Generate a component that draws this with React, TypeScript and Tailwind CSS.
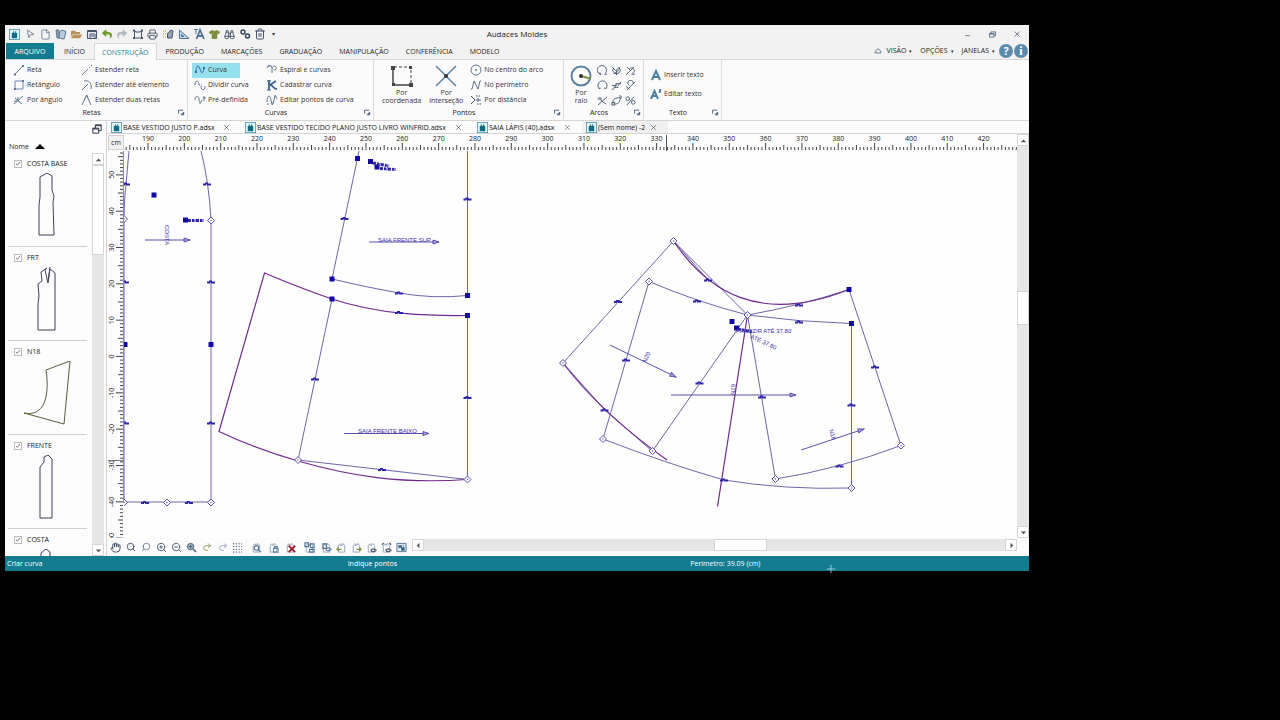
import React from "react";
import { Binoculars, File, Hand, MousePointer2, Printer, Redo2, Search, Trash2, Undo2, ZoomIn, ZoomOut } from "lucide-react";
import { FaFolderOpen, FaReply, FaShare, FaTshirt } from "react-icons/fa";

const PX_PER_CM = 3.633;

type Point = [number, number];

interface GlyphProps {
  d?: string;
  className?: string;
  children?: React.ReactNode;
}

/** Thin line icon on a 12x12 grid. */
function Glyph({ d, className = "size-3 text-slate-500", children }: GlyphProps) {
  return (
    <svg viewBox="0 0 12 12" className={`shrink-0 ${className}`} fill="none" stroke="currentColor" strokeWidth="1" aria-hidden="true">
      {d && <path d={d} />}
      {children}
    </svg>
  );
}

function AppLogo({ className = "size-[11px]" }: { className?: string }) {
  return (
    <svg viewBox="0 0 12 12" className={`shrink-0 ${className}`} aria-hidden="true">
      <rect x="0.5" y="0.5" width="11" height="11" fill="#e8f6fa" stroke="#5f9fb4" />
      <path d="M3 4.5 4.2 4V2.4h1V4h1.6V2.4h1V4l1.2.5V10H3z" fill="#0d6f86" />
    </svg>
  );
}

const QUICK_ACCESS: { label: string; icon: React.ReactNode }[] = [
  { label: "Audaces", icon: <AppLogo /> },
  { label: "Selecionar", icon: <MousePointer2 className="size-[10px] rotate-12 text-slate-500" strokeWidth={1.8} /> },
  { label: "Novo", icon: <File className="size-[11px] text-slate-500" strokeWidth={1.8} /> },
  {
    label: "Novo molde",
    icon: (
      <Glyph className="size-3 text-slate-500">
        <path d="M1 2h3v8H2z" fill="#8fa8bf" />
        <path d="M4.500 4 7 2l4 1.500-2 7.500-5-1z" fill="#b9cddc" />
      </Glyph>
    ),
  },
  { label: "Abrir", icon: <FaFolderOpen className="size-[11px] text-[#b9925a]" /> },
  {
    label: "Salvar",
    icon: (
      <Glyph className="size-3 text-slate-600">
        <path d="M1.500 2.500h9v8h-9z" fill="#e5e7eb" />
        <path d="M2 3.500h8M4 6h5v4.500H4zM5 8h3" />
      </Glyph>
    ),
  },
  { label: "Desfazer", icon: <FaReply className="size-[10px] text-[#6f9a2c]" /> },
  { label: "Refazer", icon: <FaShare className="size-[10px] text-[#b4bbc0]" /> },
  {
    label: "Encaixe",
    icon: (
      <Glyph className="size-3 text-slate-600">
        <path d="M2.500 3v7h7V3L8 4H4z" />
        <path d="M1 1.500h2v2H1zM9 1.500h2v2H9zM1 9h2v2H1zM9 9h2v2H9z" fill="currentColor" stroke="none" />
      </Glyph>
    ),
  },
  { label: "Imprimir", icon: <Printer className="size-[11px] text-slate-600" strokeWidth={2} /> },
  {
    label: "Graduar",
    icon: (
      <Glyph className="size-3 text-slate-600">
        <path d="M1 3h3M1 6h3M1 9h3" stroke="#b48a3c" strokeDasharray="1 1" />
        <path d="M5.500 10V6L9 2l2 1-1 7z" fill="#94a3b8" />
        <path d="M5 5h2" stroke="#6f9a2c" />
      </Glyph>
    ),
  },
  {
    label: "Medidas",
    icon: (
      <Glyph className="size-3 text-[#4f7396]">
        <path d="M1.500 2v8.500H11z" fill="#c5d9e8" />
        <path d="M3.500 6.500v2H6z" fill="#fff" />
      </Glyph>
    ),
  },
  {
    label: "Texto",
    icon: (
      <Glyph className="size-3 text-[#4f7396]">
        <path d="M3.500 11 7 2l4 9M5 8h4.500" strokeWidth="1.800" />
        <path d="M1 1.500h4M3 1.500V6" />
      </Glyph>
    ),
  },
  { label: "Modelo", icon: <FaTshirt className="size-[11px] text-[#7d8f3c]" /> },
  { label: "Localizar", icon: <Binoculars className="size-[11px] text-slate-600" strokeWidth={2} /> },
  {
    label: "Opções",
    icon: (
      <Glyph className="size-3 text-slate-700">
        <circle cx="4" cy="4" r="2" strokeWidth="1.400" />
        <circle cx="8.500" cy="8" r="2" strokeWidth="1.400" />
      </Glyph>
    ),
  },
  { label: "Excluir", icon: <Trash2 className="size-[12px] text-slate-600" strokeWidth={2} /> },
];

const MENU_TABS = ["INÍCIO", "CONSTRUÇÃO", "PRODUÇÃO", "MARCAÇÕES", "GRADUAÇÃO", "MANIPULAÇÃO", "CONFERÊNCIA", "MODELO"];

function TitleBar() {
  return (
    <header className="grid h-[18px] grid-cols-[1fr_auto_1fr] items-center bg-[#f2f2f2]">
      <div className="flex items-center pl-[2px]">
        {QUICK_ACCESS.map(({ label, icon }, i) => (
          <button key={label} type="button" aria-label={label} className={`flex h-3 items-center justify-center ${i % 3 === 1 ? "w-4" : "w-[15px]"}`}>
            {icon}
          </button>
        ))}
        <span className="ml-[4px] text-[6px] leading-none text-slate-700">▾</span>
      </div>
      <h1 className="text-[8px] leading-3 text-[#222]">Audaces Moldes</h1>
      <div className="flex items-center justify-end gap-4 pr-[7px] text-slate-600">
        <button type="button" aria-label="Minimizar"><Glyph d="M3 7.500h6" className="size-[9px]" /></button>
        <button type="button" aria-label="Restaurar">
          <Glyph d="M2 4.500h6v5H2zM4 4.500v-2h6v5H8M2 5.500h6" className="size-[9px]" />
        </button>
        <button type="button" aria-label="Fechar"><Glyph d="m2 2 7 7M9 2 2 9" className="size-[9px]" /></button>
      </div>
    </header>
  );
}

function MenuBar() {
  return (
    <nav className="flex h-[17px] items-stretch border-b border-[#d5d5d5] bg-[#f2f2f2] text-[7px] leading-[18px] text-[#222]">
      <button type="button" className="ml-px w-12 bg-[#147c91] text-white">ARQUIVO</button>
      <div className="flex gap-px pl-[2px]">
        {MENU_TABS.map((tab) => (
          <button
            key={tab}
            type="button"
            className={
              tab === "CONSTRUÇÃO"
                ? "-mb-px border border-b-0 border-[#d5d5d5] bg-[#fbfbfb] px-[7px] text-[#2c7f92]"
                : "px-[8px]"
            }
          >
            {tab}
          </button>
        ))}
      </div>
      <div className="ml-auto flex items-center pr-px">
        <Glyph d="M2 9c-1-2 0-3 1-3 1-4 5-4 6 0 1 0 2 1 1 3z" className="mr-px size-2 text-slate-700" />
        {["VISÃO", "OPÇÕES", "JANELAS"].map((menu) => (
          <button key={menu} type="button" className="flex items-center gap-[3px] px-[4px]">
            {menu}
            <span className="text-[5px]">▾</span>
          </button>
        ))}
        <button type="button" aria-label="Ajuda" className="size-[14px] rounded-full bg-[#5c8aab] text-[11px] leading-[14px] font-bold text-white">?</button>
        <button type="button" aria-label="Informações" className="ml-px size-[14px] rounded-full bg-[#5c8aab] font-['Liberation_Serif',serif] text-[12px] leading-[14px] font-bold text-white">i</button>
      </div>
    </nav>
  );
}

function RibbonGroup({ title, className, children }: { title: string; className: string; children: React.ReactNode }) {
  return (
    <section className={`flex shrink-0 flex-col border-r border-[#dcdcdc] pt-[2px] ${className}`}>
      <div className="flex h-[45px]">{children}</div>
      <div className="flex h-[11px] items-center text-[#222]">
        <h2 className="grow text-center">{title}</h2>
        <button type="button" aria-label={`Mais opções de ${title}`} className="mr-[2px]">
          <Glyph className="size-[7px] text-slate-600">
            <path d="M1 8V2h8" strokeWidth="1.500" />
            <path d="M10 5v5H5z" fill="currentColor" />
          </Glyph>
        </button>
      </div>
    </section>
  );
}

function Tool({ icon, label, active = false }: { icon: React.ReactNode; label: string; active?: boolean }) {
  return (
    <button type="button" className={`flex h-[15px] items-center gap-[2px] pr-[13px] pl-[2px] whitespace-nowrap ${active ? "bg-[#94e0ee]" : ""}`}>
      {icon}
      {label}
    </button>
  );
}

function BigTool({ icon, lines }: { icon: React.ReactNode; lines: [string, string] }) {
  return (
    <button type="button" className="flex flex-col items-center leading-2">
      {icon}
      <span>{lines[0]}</span>
      <span>{lines[1]}</span>
    </button>
  );
}

const LINE_TOOLS = [
  {
    label: "Reta",
    icon: (
      <Glyph>
        <path d="M2 10 10 2" />
        <path d="M1 9.500h2v2H1zM9 1h2v2H9z" fill="currentColor" stroke="none" />
      </Glyph>
    ),
  },
  {
    label: "Retângulo",
    icon: (
      <Glyph>
        <path d="M2 2h8v8H2z" stroke="#6b87b8" />
        <path d="M1 9h2v2H1zM9 1h2v2H9z" fill="currentColor" stroke="none" />
      </Glyph>
    ),
  },
  { label: "Por ângulo", icon: <Glyph d="M1 10 10 2M2 4l7 6M5 3v5M1 7h3" /> },
];

const EXTEND_TOOLS = [
  { label: "Estender reta", icon: <Glyph d="m1 11 6-6M8 4l1-1M10 2l1-1" /> },
  { label: "Estender até elemento", icon: <Glyph d="m1 11 6-6M3 2c5-1 8 2 7 8" /> },
  { label: "Estender duas retas", icon: <Glyph d="M1 11 5.500 1 10 11M4.500 3 6 1.500 7 3" /> },
];

const CURVE_TOOLS = [
  {
    label: "Curva",
    active: true,
    icon: (
      <Glyph className="size-3 text-[#35639a]">
        <path d="M2 8C2 1 5 1 6 5s3 6 4-1" />
        <path d="M1 7h2v2H1zM9 3h2v2H9zM3.500 1.500h1v1h-1z" fill="currentColor" stroke="none" />
      </Glyph>
    ),
  },
  { label: "Dividir curva", active: false, icon: <Glyph d="M1 6c0-5 4-5 4 0M7 7c0 5 4 5 4 0M5 6h1M7 6h1" /> },
  { label: "Pré-definida", active: false, icon: <Glyph d="M1 6c0-5 4-4 4-1s2 5 3 1M10 2v5M9 4h3M6 8v2" /> },
];

const SPECIAL_CURVE_TOOLS = [
  { label: "Espiral e curvas", icon: <Glyph d="M1 4c1-4 5-3 5 0v5M6 4c2-4 5-1 4 1s-2 1-2 0M2 2h3" /> },
  {
    label: "Cadastrar curva",
    icon: (
      <Glyph className="size-3 text-[#3b5f8c]">
        <path d="M3 1v10M4 6l6-4M4 6c3 0 3 4 7 4" strokeWidth="1.800" />
        <path d="M1 2h4M1 11h4" />
      </Glyph>
    ),
  },
  { label: "Editar pontos de curva", icon: <Glyph d="M1 8c0-7 3-8 4-2s2 6 3 0 2-5 3-1M2 9v2M6 8v3M9 1v2" /> },
];

const POINT_TOOLS = [
  {
    label: "No centro do arco",
    icon: (
      <Glyph>
        <circle cx="6" cy="6" r="5" />
        <circle cx="6" cy="6" r="1" fill="currentColor" stroke="none" />
      </Glyph>
    ),
  },
  { label: "No perímetro", icon: <Glyph d="M1 10h1l2-8 4 8 2-8h1" /> },
  {
    label: "Por distância",
    icon: (
      <Glyph d="m1 2 4 4-4 4M6 6h5" className="size-3 text-slate-600">
        <path d="M6 2h5M7 10h4M8 4v5" strokeDasharray="1.500 1" />
      </Glyph>
    ),
  },
];

const ARC_TOOLS = [
  { label: "Arco 1", d: "M3 10a5 5 0 1 1 6-1M2 9h2v2M8 10h3" },
  { label: "Arco 2", d: "m1 2 4 4 5-4M3 3a4 4 0 1 0 6 0M6 6v5M3 10l6-5" },
  { label: "Arco 3", d: "m1 11 9-9M2 2l4 4M5 4a3 3 0 1 1 3 5M7 10h4" },
  { label: "Arco 4", d: "M3 10a5 5 0 1 1 6 0M2 9h2M8 9h2" },
  { label: "Arco 5", d: "M1 10c3 1 4-4 5-6M5 4h6M1 6h5M7 7l4-5M3 8h5" },
  { label: "Arco 6", d: "m2 11 9-9M5 6a3 3 0 1 1 4-2M1 7l4 3" },
  { label: "Arco 7", d: "m1 11 10-9M2 4l8 6M1 5a2 2 0 0 1 4 0" },
  { label: "Arco 8", d: "M2 9C2 4 5 3 10 3M3 10c5 0 7-2 7-7M1 8h3v3H1zM9 1h2v3" },
  { label: "Arco 9", d: "m2 11 8-9M5 4a2 2 0 1 1-4 0 2 2 0 0 1 4 0M11 8a2 2 0 1 1-4 0 2 2 0 0 1 4 0" },
];

function Ribbon() {
  return (
    <div className="flex h-[61px] border-b border-[#d5d5d5] bg-[#fbfbfb] text-[7px] leading-3 text-[#333]">
      <RibbonGroup title="Retas" className="w-[183px]">
        <div className="flex w-[74px] flex-col items-start pt-px pl-[6px]">
          {LINE_TOOLS.map((tool) => <Tool key={tool.label} {...tool} />)}
        </div>
        <div className="flex flex-col items-start pt-px">
          {EXTEND_TOOLS.map((tool) => <Tool key={tool.label} {...tool} />)}
        </div>
      </RibbonGroup>

      <RibbonGroup title="Curvas" className="w-[186px]">
        <div className="flex w-[76px] flex-col items-start pt-px pl-[4px]">
          {CURVE_TOOLS.map((tool) => <Tool key={tool.label} {...tool} />)}
        </div>
        <div className="flex flex-col items-start pt-px">
          {SPECIAL_CURVE_TOOLS.map((tool) => <Tool key={tool.label} {...tool} />)}
        </div>
      </RibbonGroup>

      <RibbonGroup title="Pontos" className="w-[190px]">
        <div className="flex gap-[8px] pt-[2px] pl-[8px]">
          <BigTool
            lines={["Por", "coordenada"]}
            icon={
              <svg viewBox="0 0 24 24" className="mb-px size-6" fill="none" stroke="#444" strokeWidth="1.500" aria-hidden="true">
                <path d="M3 3v18h17" />
                <path d="M4 3h17v17" strokeDasharray="3 2" strokeWidth="1" />
                <path d="M1 2h4v4H1zM19 2h3v3h-3zM19 19h4v4h-4zM2 19h3v3H2z" fill="#444" stroke="none" />
              </svg>
            }
          />
          <BigTool
            lines={["Por", "interseção"]}
            icon={
              <svg viewBox="0 0 24 24" className="mb-px size-6" fill="none" stroke="#5c80a0" strokeWidth="1.500" aria-hidden="true">
                <path d="m2 2 20 20M22 2 2 22" />
                <circle cx="12" cy="12" r="2" fill="#333" stroke="none" />
              </svg>
            }
          />
        </div>
        <div className="ml-[5px] flex flex-col items-start pt-px">
          {POINT_TOOLS.map((tool) => <Tool key={tool.label} {...tool} />)}
        </div>
      </RibbonGroup>

      <RibbonGroup title="Arcos" className="w-20">
        <div className="pt-[2px] pl-[5px]">
          <BigTool
            lines={["Por", "raio"]}
            icon={
              <svg viewBox="0 0 24 24" className="mb-px size-6" fill="none" stroke="#5c80a0" strokeWidth="2" aria-hidden="true">
                <circle cx="12" cy="12" r="9.500" />
                <path d="m12 12 9 2.500" stroke="#7d8f3c" />
                <circle cx="12" cy="12" r="2" fill="#333" stroke="none" />
              </svg>
            }
          />
        </div>
        <div className="ml-[4px] grid grid-cols-3 content-start gap-x-[3px] pt-px">
          {ARC_TOOLS.map(({ label, d }) => (
            <button key={label} type="button" aria-label={label} className="flex h-[15px] items-center">
              <Glyph d={d} className="size-[11px] text-slate-600" />
            </button>
          ))}
        </div>
      </RibbonGroup>

      <RibbonGroup title="Texto" className="w-[78px]">
        <div className="flex flex-col items-start gap-1 pt-[5px] pl-[4px]">
          <Tool label="Inserir texto" icon={<Glyph d="M2 11 6 2l4 9M3.500 8h5" className="size-3 text-[#4f7fa3] stroke-2" />} />
          <Tool label="Editar texto" icon={<Glyph d="M1 11 4.500 3 8 11M2.500 8h4M10.500 1 9.500 5" className="size-3 text-[#4f7fa3] stroke-2" />} />
        </div>
      </RibbonGroup>
    </div>
  );
}

const PIECES = [
  { name: "COSTA BASE", color: "#3f3f58", d: "M36 4 43 0l5 3v14l2 6-1 6 1 33H35V32l1-8z" },
  { name: "FRT", color: "#3f3f58", d: "M43 1 37 5l1 9-4 3 1 12-1 8v26h17V6l-5-4-2 14-3-13zM46 0l-2 14" },
  { name: "N18", color: "#5c5c3c", d: "M42 9 66 0l-6 63-40-11c20 4 26-16 22-43z" },
  { name: "FRENTE", color: "#3f3f58", d: "M40 2 44 0l4 4v59H36V12l4-5z" },
  { name: "COSTA", color: "#3f3f58", d: "M37 4 42 0l4 3v60H37z" },
];

function PiecePanel() {
  return (
    <aside className="flex w-[102px] shrink-0 flex-col border-r border-[#d5d5d5] bg-[#fcfcfc] text-[7px] text-[#222]">
      <div className="flex h-3 justify-end pt-[3px] pr-[4px]">
        <button type="button" aria-label="Soltar painel">
          <Glyph d="M1 5h7v6H1zM4 5V1h7v7H8M1 6h7M4 2h7" className="size-[10px] text-slate-900" />
        </button>
      </div>
      <button type="button" className="mt-[7px] ml-1 flex h-[13px] items-center gap-[6px] leading-3">
        Nome
        <svg viewBox="0 0 10 5" className="h-[5px] w-[10px]" aria-hidden="true"><path d="M0 5 5 0l5 5z" /></svg>
      </button>
      <div className="flex h-[403px]">
        <ul className="grow overflow-hidden pl-[3px]">
          {PIECES.map(({ name, color, d }) => (
            <li key={name} className="mr-[5px] h-[94px] border-b border-[#cfcfcf] pt-[5px]">
              <label className="flex h-3 items-center gap-[5px] pl-[6px] leading-3">
                <span className="grid size-2">
                  <input type="checkbox" defaultChecked className="col-start-1 row-start-1 size-2 appearance-none border border-[#bbb] bg-white" />
                  <Glyph d="m3 6 2 2 4-5" className="pointer-events-none col-start-1 row-start-1 size-2 text-slate-700" />
                </span>
                {name}
              </label>
              <svg viewBox="0 0 78 66" className="mt-[3px] ml-[-4px] h-[66px] w-[78px]" fill="none" stroke={color} strokeWidth="1" aria-hidden="true">
                <path d={d} />
              </svg>
            </li>
          ))}
        </ul>
        <div className="mr-[2px] flex w-3 flex-col bg-[#e6e6e6]">
          <ScrollButton direction="up" />
          <div className="h-[90px] border border-[#d5d5d5] bg-white" />
          <div className="grow" />
          <ScrollButton direction="down" />
        </div>
      </div>
    </aside>
  );
}

const ARROWS = {
  up: "M3 8 6 5l3 3z",
  down: "m3 5 3 3 3-3z",
  left: "M7 3 4 6l3 3z",
  right: "m5 3 3 3-3 3z",
};

function ScrollButton({ direction }: { direction: keyof typeof ARROWS }) {
  return (
    <button type="button" aria-label={`Rolar ${direction}`} className="flex size-3 shrink-0 items-center justify-center border border-[#d5d5d5] bg-white">
      <svg viewBox="0 0 12 12" className="size-[11px] shrink-0" fill="#555" aria-hidden="true"><path d={ARROWS[direction]} /></svg>
    </button>
  );
}

const DOCUMENTS = [
  { name: "BASE VESTIDO JUSTO P.adsx", className: "w-[134px]" },
  { name: "BASE VESTIDO TECIDO PLANO JUSTO LIVRO WINFRID.adsx", className: "w-[232px]" },
  { name: "SAIA LÁPIS (40).adsx", className: "w-[109px]" },
  { name: "(Sem nome) -2", className: "w-[86px] bg-[#f0f0f0]" },
];

function DocumentTabs() {
  return (
    <div className="flex h-[13px] border-b border-[#d5d5d5] bg-[#fcfcfc] text-[7px] leading-[13px] text-[#111]">
      {DOCUMENTS.map(({ name, className }) => (
        <div key={name} className={`flex shrink-0 items-center pl-1 ${className}`}>
          <button type="button" className="flex items-center gap-px whitespace-nowrap">
            <AppLogo />
            {name}
          </button>
          <button type="button" aria-label={`Fechar ${name}`} className="mr-[11px] ml-auto">
            <Glyph d="m2 2 8 8M10 2l-8 8" className="size-[7px] text-slate-700" />
          </button>
        </div>
      ))}
    </div>
  );
}

function range(from: number, to: number) {
  return Array.from({ length: to - from + 1 }, (_, i) => from + i);
}

function tickSize(v: number) {
  if (v % 10 === 0) return 7;
  return v % 5 === 0 ? 5 : 3;
}

function HorizontalRuler() {
  const x = (v: number) => 24 + (v - 190) * PX_PER_CM;
  return (
    <svg className="h-full min-w-0 grow" fontSize="7" fill="#222" aria-label="Régua horizontal">
      {range(184, 429).map((v) => (
        <path key={v} d={`M${x(v)} 16v-${tickSize(v)}`} stroke="#444" />
      ))}
      {range(19, 42).map((v) => (
        <text key={v} x={x(v * 10)} y="7" textAnchor="middle">{v * 10}</text>
      ))}
      <path d="M542.500 1v16" stroke="#555" />
    </svg>
  );
}

function VerticalRuler() {
  const y = (v: number) => 205.5 - v * PX_PER_CM;
  return (
    <svg className="h-full w-[17px] shrink-0" fontSize="7" fill="#222" aria-label="Régua vertical">
      <path d="M16.500 0v352" stroke="#8d86c4" />
      {range(-50, 56).map((v) => (
        <path key={v} d={`M16 ${y(v)}h-${tickSize(v)}`} stroke="#444" />
      ))}
      {range(-5, 5).map((v) => (
        <text key={v} transform={`translate(7 ${y(v * 10)}) rotate(-90)`} textAnchor="middle">{v * 10}</text>
      ))}
      <path d="M1 309.500h15" stroke="#777" />
    </svg>
  );
}

// All pattern coordinates share one drawing space whose visible corner is ORIGIN.
const ORIGIN: Point = [124, 151];

const THIN_LINES = [
  "M129 151 126 184Q124 200 124 220V502H211V220Q209 182 201 151",
  "M359 151 332 279M332 299 298 460 467.500 479.500M467.500 151V296M467.500 315V479",
  "M332 279Q365 287 399 293T467.500 295.500",
  "M673.500 241 563 363M649 281.500 603 439M673.500 241 747.500 315 652.500 451M747.500 315 775.500 479",
  "M649 281.500Q697 302 747.500 315Q799 322 851.500 323.500V488",
  "M747.500 315Q799 306 849 289.500L901 445.500Q839 469 775.500 479",
  "M603 439Q665 463 724 480Q785 490 851.500 488",
  "M563 363 605 410 652 451M673.500 241 708 280",
];

const CURVES = [
  "M467.500 315.500C430 316 380 315 332 299Q300 288 264.500 273L219 431.500Q256 449 298 461C350 476 400 484 467.500 479.500",
  "M673.500 241C708 292 760 325 849 289.500",
  "M747.500 315 717.500 506.500M563 363Q602 414 667 460",
];

const ANCHORS: Point[] = [
  [154, 195], [185.5, 220], [125, 344.5], [211, 344.5], [357.5, 158.5], [370.5, 161.5], [377, 167],
  [332, 279], [332, 299], [467.5, 295.5], [467.5, 315.5], [849, 289.5], [851.5, 323.5], [732, 321.5], [736.5, 328],
];

const NODES: Point[] = [
  [124, 219], [211, 220.5], [124, 502.5], [167, 502.5], [211, 502.5], [298, 460], [467.5, 479.5],
  [673.5, 241], [649, 281.5], [747.5, 315], [563, 363], [603, 439], [652.5, 451], [775.5, 479], [901, 445.5], [851.5, 488],
];

const MEASURES: Point[] = [
  [126, 184], [207, 184], [125, 282], [211, 282], [125, 423], [211, 423], [145, 502.5], [189, 502.5],
  [344.5, 218.5], [467.5, 199], [399, 293], [399, 312.5], [315, 379], [467.5, 397.5], [382, 469.5],
  [618, 301.5], [697, 301], [708, 280], [799, 305], [799, 322], [626, 360], [699.5, 383], [762, 397],
  [851.5, 405], [875, 367], [604.5, 410], [724, 480], [839.5, 466],
];

const GRAIN_LINES: [Point, Point][] = [
  [[145, 240], [190, 240]],
  [[369, 242], [439, 242]],
  [[344, 433.5], [429, 433.5]],
  [[610, 345], [676, 377]],
  [[671, 395], [796, 395]],
  [[801, 450], [864, 429]],
];

const LABELS: { text: string; at: Point; angle: number }[] = [
  { text: "COSTA", at: [165, 225], angle: 90 },
  { text: "SAIA FRENTE SUP", at: [378, 242], angle: 0 },
  { text: "SAIA FRENTE BAIXO", at: [358, 433], angle: 0 },
  { text: "FRANZIR ATÉ 37.80", at: [736, 333], angle: 0 },
  { text: "ATÉ 37.80", at: [750, 338], angle: 25 },
  { text: "N20", at: [646, 363], angle: -65 },
  { text: "N19", at: [735, 395], angle: -88 },
  { text: "N18", at: [829, 430], angle: 72 },
];

function PatternCanvas() {
  return (
    <svg className="h-full min-w-0 grow bg-[#fefefe]" fill="none" stroke="#5b4fae" strokeWidth="1" aria-label="Área de desenho">
      <g transform={`translate(${-ORIGIN[0]} ${-ORIGIN[1]})`}>
        {THIN_LINES.map((d) => <path key={d} d={d} stroke="#6c66a8" />)}
        {CURVES.map((d) => <path key={d} d={d} stroke="#6f2790" strokeWidth="1.200" />)}

        {GRAIN_LINES.map(([[x1, y1], [x2, y2]]) => (
          <g key={`${x1}-${y1}`}>
            <path d={`M${x1} ${y1}L${x2} ${y2}`} />
            <path
              d="m-6-2 6 2-6 2z"
              fill="#a9a3dc"
              transform={`translate(${x2} ${y2}) rotate(${(Math.atan2(y2 - y1, x2 - x1) * 180) / Math.PI})`}
            />
          </g>
        ))}

        {MEASURES.map(([x, y]) => (
          <path key={`${x}-${y}`} d={`M${x - 4} ${y + 0.5}h3M${x - 2} ${y - 0.5}h3M${x} ${y + 0.5}h4`} stroke="#2f24a8" strokeWidth="2" />
        ))}
        {ANCHORS.map(([x, y]) => (
          <rect key={`${x}-${y}`} x={x - 2.5} y={y - 2.5} width="5" height="5" fill="#1208a4" stroke="none" />
        ))}
        {NODES.map(([x, y]) => (
          <g key={`${x}-${y}`}>
            <path d={`M${x - 3.5} ${y}l3.500-3.500 3.500 3.500-3.500 3.500z`} fill="#fff" />
            <circle cx={x} cy={y} r="0.700" fill="#5b4fae" stroke="none" />
          </g>
        ))}

        {/* notes beside the dart anchors */}
        <path
          d="M188 220.500h16M373 163l16 3M380 168.500l16 1M738 329l14 3"
          stroke="#2f24a8"
          strokeWidth="3"
          strokeDasharray="3 1 2 0.500 1 0.500"
        />

        <g fill="#3a2fb0" stroke="none" fontSize="6" className="font-['Liberation_Sans',sans-serif]">
          {LABELS.map(({ text, at, angle }) => (
            <text key={text} transform={`translate(${at[0]} ${at[1]}) rotate(${angle})`}>{text}</text>
          ))}
        </g>
      </g>
    </svg>
  );
}

const VIEW_TOOLS: { label: string; icon: React.ReactNode }[] = [
  { label: "Mover", icon: <Hand className="size-[11px] text-slate-700" /> },
  { label: "Zoom", icon: <Search className="size-[10px] text-slate-700" /> },
  { label: "Zoom anterior", icon: <Search className="size-[10px] -scale-x-100 text-slate-500" /> },
  { label: "Aproximar", icon: <ZoomIn className="size-[11px] text-slate-600" /> },
  { label: "Afastar", icon: <ZoomOut className="size-[11px] text-slate-600" /> },
  {
    label: "Zoom total",
    icon: (
      <Glyph className="size-[11px] text-slate-600">
        <circle cx="5" cy="5" r="3.500" fill="#9fbbce" />
        <path d="M5 3v4M3 5h4" />
        <path d="m8 8 3 3" strokeWidth="1.500" />
      </Glyph>
    ),
  },
  { label: "Desfazer vista", icon: <Undo2 className="size-[10px] -scale-x-100 text-[#8a8a4c]" /> },
  { label: "Refazer vista", icon: <Redo2 className="size-[10px] text-slate-400" /> },
  {
    label: "Grade",
    icon: <Glyph d="M1 2h10M1 5h10M1 8h10M1 11h10" className="size-[11px] text-slate-600 [stroke-dasharray:1.500_1.500]" />,
  },
];

const PIECE_TOOLS = [
  { label: "Localizar molde", accent: "M6 4a2.500 2.500 0 1 1 0 5 2.500 2.500 0 0 1 0-5M8 9l3 2", color: "#4f7396", width: "w-[17px]" },
  { label: "Bloquear molde", accent: "M6 7h5v4H6zM7 7V5h3v2", color: "#5c86a8", width: "w-[17px]" },
  { label: "Remover molde", accent: "m4 4 7 7M11 4l-7 7", color: "#a61c2c", width: "w-[17px]" },
  { label: "Organizar moldes", accent: "M1 1h4v4H1zM7 2h4v4H7zM6 8h5v3H6z", color: "#4f7396", width: "w-[20px]" },
  { label: "Ver molde", accent: "M5 8c2-2 4-2 6 0-2 2-4 2-6 0M2 2h4v5H2z", color: "#4f7396", width: "w-[15px]" },
  { label: "Molde anterior", accent: "M1 8h5M3 6 1 8l2 2", color: "#7d8f3c", width: "w-[15px]" },
  { label: "Próximo molde", accent: "M6 8h5M9 6l2 2-2 2", color: "#7d8f3c", width: "w-[15px]" },
  { label: "Esconder molde", accent: "M5 9c2-2 4-2 6 0-2 2-4 2-6 0", color: "#475569", width: "w-[15px]" },
  { label: "Mostrar todos", accent: "M5 9c2-2 4-2 6 0-2 2-4 2-6 0M1 3l2-2M9 1l2 2", color: "#475569", width: "w-[15px]" },
];

function ViewToolbar() {
  return (
    <div className="flex h-full shrink-0 items-center">
      {VIEW_TOOLS.map(({ label, icon }, i) => (
        <button key={label} type="button" aria-label={label} className={`flex h-3 items-center justify-center ${i % 3 ? "w-[15px]" : "w-4"}`}>
          {icon}
        </button>
      ))}
      <div className="ml-[3px] flex items-center">
        {PIECE_TOOLS.map(({ label, accent, color, width }) => (
          <button key={label} type="button" aria-label={label} className={`flex h-3 items-center justify-center ${width}`}>
            <Glyph d="M2.500 11V4L4 2h.500v1.500h2V2H8l1.500 2v7z" className="size-[11px] text-slate-400">
              <path d={accent} stroke={color} strokeWidth={color === "#a61c2c" ? 2 : 1.2} />
            </Glyph>
          </button>
        ))}
        <button type="button" aria-label="Painel" className="flex w-[15px] justify-center">
          <Glyph className="size-[11px] text-[#4f7396]">
            <path d="M1 1.500h10v9H1z" fill="#dceaf3" />
            <path d="M3 4h3v2H3zM6 6h3v3H6zM8 3v2" fill="#335f84" />
          </Glyph>
        </button>
      </div>
    </div>
  );
}

function Workspace() {
  return (
    <main className="flex min-w-0 grow flex-col">
      <DocumentTabs />
      <div className="flex">
        <div className="min-w-0 grow">
          <div className="flex h-[17px] bg-[#fcfcfc]">
            <div className="m-px mr-0 flex w-4 items-center justify-center border border-[#d0d0d0] bg-[#f2f2f2] text-[7px] leading-3 text-[#222]">cm</div>
            <HorizontalRuler />
          </div>
          <div className="flex h-[387px] bg-[#fcfcfc]">
            <VerticalRuler />
            <PatternCanvas />
          </div>
        </div>
        <div className="flex w-3 flex-col bg-[#e6e6e6]">
          <ScrollButton direction="up" />
          <div className="h-[145px]" />
          <div className="h-[34px] border border-[#d5d5d5] bg-white" />
          <div className="grow" />
          <ScrollButton direction="down" />
        </div>
      </div>
      <div className="flex h-[18px] bg-[#fcfcfc]">
        <ViewToolbar />
        <div className="mt-px mr-3 ml-[3px] flex h-3 min-w-0 grow bg-[#e6e6e6]">
          <ScrollButton direction="left" />
          <div className="w-[48%]" />
          <div className="w-[53px] border border-[#d5d5d5] bg-white" />
          <div className="grow" />
          <ScrollButton direction="right" />
        </div>
      </div>
    </main>
  );
}

function StatusBar() {
  return (
    <footer className="relative grid h-[15px] grid-cols-3 bg-[#147c91] pl-[2px] text-[7px] leading-[15px] text-white">
      <span>Criar curva</span>
      <span>Indique pontos</span>
      <span className="pl-[2px]">Perímetro: 39.09 (cm)</span>
      <Glyph d="M6 1v10M1 6h10" className="absolute top-2 left-[821px] size-[10px] text-[#b5d3f0]" />
    </footer>
  );
}

export default function App() {
  return (
    <div className="min-h-screen bg-black pt-[25px] pr-[251px] pl-[5px] font-['Open_Sans','Noto_Sans',sans-serif]">
      <div className="bg-[#fcfcfc]">
        <TitleBar />
        <MenuBar />
        <Ribbon />
        <div className="flex">
          <PiecePanel />
          <Workspace />
        </div>
        <StatusBar />
      </div>
    </div>
  );
}
